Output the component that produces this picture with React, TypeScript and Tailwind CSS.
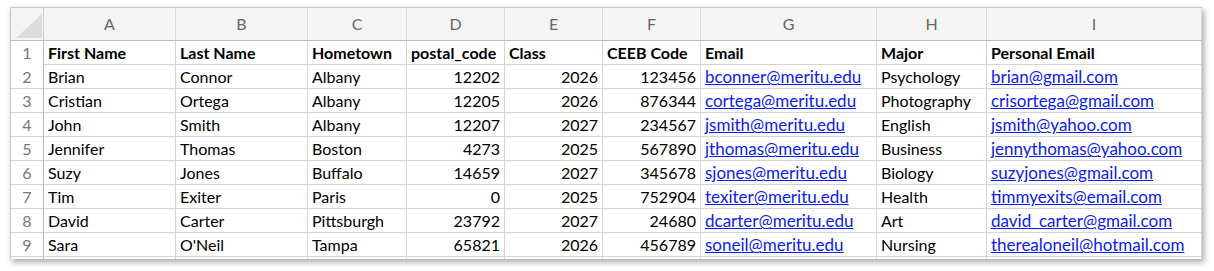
const cols = ["A", "B", "C", "D", "E", "F", "G", "H", "I"];

const rows = [
  ["Brian", "Connor", "Albany", "12202", "2026", "123456", "bconner@meritu.edu", "Psychology", "brian@gmail.com"],
  ["Cristian", "Ortega", "Albany", "12205", "2026", "876344", "cortega@meritu.edu", "Photography", "crisortega@gmail.com"],
  ["John", "Smith", "Albany", "12207", "2027", "234567", "jsmith@meritu.edu", "English", "jsmith@yahoo.com"],
  ["Jennifer", "Thomas", "Boston", "4273", "2025", "567890", "jthomas@meritu.edu", "Business", "jennythomas@yahoo.com"],
  ["Suzy", "Jones", "Buffalo", "14659", "2027", "345678", "sjones@meritu.edu", "Biology", "suzyjones@gmail.com"],
  ["Tim", "Exiter", "Paris", "0", "2025", "752904", "texiter@meritu.edu", "Health", "timmyexits@email.com"],
  ["David", "Carter", "Pittsburgh", "23792", "2027", "24680", "dcarter@meritu.edu", "Art", "david_carter@gmail.com"],
  ["Sara", "O'Neil", "Tampa", "65821", "2026", "456789", "soneil@meritu.edu", "Nursing", "therealoneil@hotmail.com"],
];

const headers = ["First Name", "Last Name", "Hometown", "postal_code", "Class", "CEEB Code", "Email", "Major", "Personal Email"];

const grid = "grid grid-cols-[33px_132px_132px_99px_98px_98px_98px_176px_110px_215px]";
const numeric = [3, 4, 5];
const links = [6, 8];

export default function App() {
  return (
    <div className="w-[1214px] h-[271px] bg-white pl-[10px] pt-[7px] font-['Lato',sans-serif]">
      <div className="w-[1192px] h-[252px] overflow-hidden border-l border-t border-[#c8c8c8] shadow-[2px_3px_6px_rgba(0,0,0,0.35)]">
        <div className={`${grid} h-[33px] bg-[#f4f4f4] border-b border-[#bdbdbd] text-[16px] text-[#666]`}>
          <div className="relative border-r border-[#d0d0d0]">
            <div className="absolute left-[5px] top-[6px] w-[26px] h-[24px] bg-[#dcdcdc] [clip-path:polygon(100%_0,100%_100%,0_100%)]" />
          </div>
          {cols.map((c) => (
            <div key={c} className="flex items-center justify-center border-r border-[#dadada]">
              {c}
            </div>
          ))}
        </div>
        <div className={`${grid} h-[24px] border-b border-[#d4d4d4] text-[16px] text-black`}>
          <div className="flex items-center justify-center border-r border-[#bdbdbd] bg-white text-[#777]">1</div>
          {headers.map((h) => (
            <div key={h} className="flex items-center px-[4px] font-bold border-r border-[#d4d4d4] whitespace-nowrap overflow-hidden">
              {h}
            </div>
          ))}
        </div>
        {rows.map((r, i) => (
          <div key={i} className={`${grid} h-[24px] border-b border-[#d4d4d4] text-[16px] text-black`}>
            <div className="flex items-center justify-center border-r border-[#bdbdbd] text-[#777]">{i + 2}</div>
            {r.map((v, j) => (
              <div
                key={j}
                className={`flex items-center px-[4px] border-r border-[#d4d4d4] whitespace-nowrap overflow-hidden ${
                  numeric.includes(j) ? "justify-end" : ""
                } ${links.includes(j) ? "text-[#0b22e6] underline text-[17px]" : ""}`}
              >
                {v}
              </div>
            ))}
          </div>
        ))}
        <div className={`${grid} h-[4px]`}>
          <div className="border-r border-[#bdbdbd]" />
          {cols.map((c) => (
            <div key={c} className="border-r border-[#d4d4d4]" />
          ))}
        </div>
      </div>
    </div>
  );
}
